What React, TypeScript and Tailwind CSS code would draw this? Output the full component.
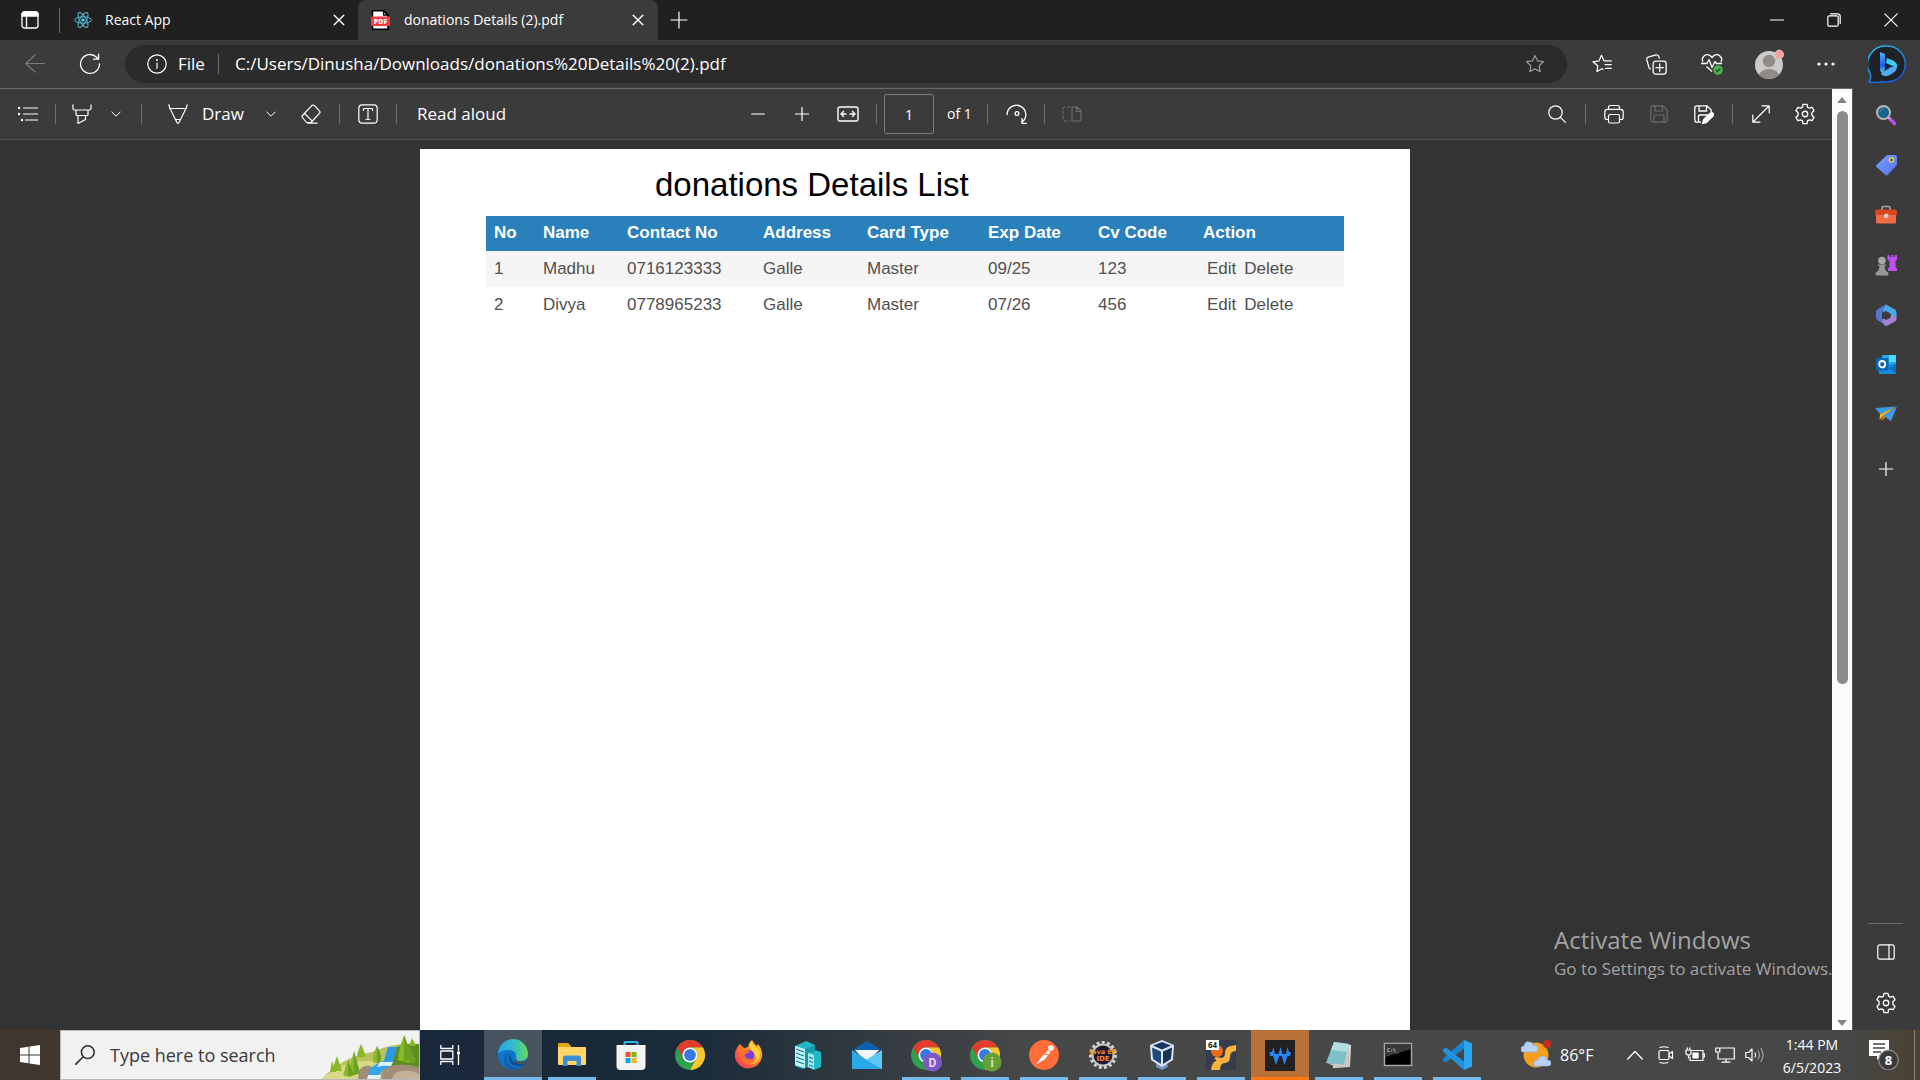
import React, { ReactNode } from "react";

type IconProps = { children: ReactNode; size?: string; box?: string; width?: number };

function Line({ children, size = "size-5", box = "0 0 20 20", width = 1.2 }: IconProps) {
  return (
    <svg className={`${size} shrink-0`} viewBox={box} fill="none" stroke="currentColor" strokeWidth={width} strokeLinecap="round" strokeLinejoin="round" aria-hidden="true">
      {children}
    </svg>
  );
}

function Art({ children, size = "size-[30px]", box = "0 0 30 30" }: IconProps) {
  return (
    <svg className={`${size} shrink-0`} viewBox={box} aria-hidden="true">
      {children}
    </svg>
  );
}

function Cell({ label, className, children }: { label: string; className: string; children: ReactNode }) {
  return (
    <button type="button" aria-label={label} className={`flex h-full shrink-0 items-center justify-center ${className}`}>
      {children}
    </button>
  );
}

const Divider = ({ className = "" }: { className?: string }) => <span className={`h-5 w-px shrink-0 bg-[#6e6e6e] ${className}`} />;

const Close = () => (
  <Line size="size-3" box="0 0 12 12" width={1.4}><path d="M1.2 1.2l9.6 9.6M10.8 1.2l-9.6 9.6" /></Line>
);
const Chevron = () => <Line size="size-[10px]" box="0 0 10 10" width={1}><path d="M.8 3l4.2 4.2L9.2 3" /></Line>;
const Gear = () => (
  <Line size="size-[22px]">
    <circle cx="10" cy="10" r="2.5" />
    <path d="M8.2 1.3h3.6l.5 2.4 1.7 1 2.4-.8 1.8 3.1-1.9 1.7v2.6l1.9 1.7-1.8 3.1-2.4-.8-1.7 1-.5 2.4H8.2l-.5-2.4-1.7-1-2.4.8L1.8 13l1.9-1.7V8.7L1.8 7l1.8-3.1 2.4.8 1.7-1z" />
  </Line>
);

function TabBar() {
  return (
    <div className="flex h-10 shrink-0 items-center bg-[#202020]">
      <Cell label="Tab actions" className="w-[59px]">
        <Line size="size-[18px]" box="0 0 18 18" width={1.3}>
          <rect x="1" y="1" width="16" height="16" rx="2.5" />
          <path d="M1 5V3.4Q1 1 3.4 1h11.2Q17 1 17 3.4V5z" fill="currentColor" />
          <path d="M5.5 5v12" />
        </Line>
      </Cell>
      <span className="h-[25px] w-px bg-[#6a6a6a]" />
      <div className="flex h-full w-[298px] items-center pl-3.5">
        <Art size="size-[18px]" box="0 0 18 18">
          <g fill="none" stroke="#53bcd8" strokeWidth="1">
            <ellipse cx="9" cy="9" rx="8.4" ry="3.2" />
            <ellipse cx="9" cy="9" rx="8.4" ry="3.2" transform="rotate(60 9 9)" />
            <ellipse cx="9" cy="9" rx="8.4" ry="3.2" transform="rotate(120 9 9)" />
          </g>
          <circle cx="9" cy="9" r="1.6" fill="#61dafb" />
        </Art>
        <span className="ml-[13px] text-sm">React App</span>
        <Cell label="Close React App" className="ml-auto w-[38px]"><Close /></Cell>
      </div>
      <div className="flex h-full w-[300px] items-center rounded-t-lg bg-[#3b3b3b] pl-[13px]">
        <Art size="h-5 w-[19px]" box="0 0 19 20">
          <path d="M1.5.8H13L17 5v14.2H1.5z" fill="#fff" stroke="#000" strokeWidth="1.5" />
          <path d="M12.6.8V5H17z" fill="#fff" stroke="#000" strokeWidth="1.4" />
          <rect y="6.5" width="19" height="9.5" rx="1" fill="#f63b3b" />
          <text x="9.5" y="13.8" textAnchor="middle" fontSize="7" fontWeight="800" fill="#fff" fontFamily="Open Sans">PDF</text>
        </Art>
        <span className="ml-3.5 text-sm">donations Details (2).pdf</span>
        <Cell label="Close donations Details" className="ml-auto w-10"><Close /></Cell>
      </div>
      <Cell label="New tab" className="w-[42px]">
        <Line size="size-[18px]" box="0 0 18 18"><path d="M9 1v16M1 9h16" /></Line>
      </Cell>
      <div className="ml-auto flex h-full">
        <Cell label="Minimize" className="w-[57px]"><Line size="size-3.5" box="0 0 14 14"><path d="M.5 7h13" /></Line></Cell>
        <Cell label="Restore" className="w-[57px]">
          <Line size="size-3.5" box="0 0 14 14"><rect x=".8" y="2.8" width="10.4" height="10.4" rx="1.5" /><path d="M3.5.8h7Q13.2.8 13.2 3.5v7" /></Line>
        </Cell>
        <Cell label="Close window" className="w-[58px]"><Line size="size-3.5" box="0 0 14 14"><path d="M.8.8l12.4 12.4M13.2.8L.8 13.2" /></Line></Cell>
      </div>
    </div>
  );
}

const star = "M10 1.6l2.6 5.3 5.8.8-4.2 4.1 1 5.8L10 14.9l-5.2 2.7 1-5.8L1.6 7.7l5.8-.8z";

function AddressBar() {
  return (
    <div className="flex h-12 shrink-0 items-center bg-[#3b3b3b]">
      <Cell label="Back" className="w-[70px] text-[#7b7b7b]"><Line><path d="M19.4 9.5H.8M10 1L.8 9.5 10 18" /></Line></Cell>
      <Cell label="Refresh" className="w-10"><Line size="size-[22px]"><path d="M18.6 10A8.6 8.6 0 1 1 16 3.8l1.2 1.3M17.8 1v4.6h-4.6" /></Line></Cell>
      <div className="ml-[15px] flex h-[38px] flex-1 items-center rounded-full bg-[#2b2b2b] pl-[22px]">
        <Line><circle cx="10" cy="10" r="9.2" /><path d="M10 9v5.2" /><circle cx="10" cy="6" r=".4" fill="currentColor" /></Line>
        <span className="ml-[11px] w-7 text-[17px]">File</span>
        <Divider className="ml-3" />
        <input aria-label="Address" className="ml-4 min-w-0 flex-1 bg-transparent text-[17px] outline-none" defaultValue="C:/Users/Dinusha/Downloads/donations%20Details%20(2).pdf" />
        <Cell label="Add to favorites" className="mr-[22px] w-5 text-[#9a9a9a]"><Line><path d={star} /></Line></Cell>
      </div>
      <div className="flex h-full items-center pl-[7px]">
        <Cell label="Favorites" className="w-[55px]">
          <Line><path d="M11 15.4l-1.2-.6-4.9 2.8.9-5.8-4.9-4 6-.9L9.5 1.3l2.6 5.6h7.2M13 10.6h6.3M13.5 14.4h5.8" /></Line>
        </Cell>
        <Cell label="Collections" className="w-[55px]">
          <Line size="size-[21px]"><rect x="6.8" y="6.8" width="12.4" height="12.4" rx="2.5" /><path d="M13 9.5v7M9.5 13h7M4.2 14.2L3 13.4.8 5.6Q.4 3.6 2 3L9.6.9Q11.2.6 12 2l.7 2" /></Line>
        </Cell>
        <Cell label="Browser essentials" className="w-[55px]">
          <svg className="size-[22px]" viewBox="0 0 22 22" fill="none" stroke="currentColor" strokeWidth="1.3" strokeLinejoin="round" aria-hidden="true">
            <path d="M2 9C-.5 4 5 0 9 2.5l2 2 2-2C17 0 22.5 4 20 9M5.5 13.5l5.5 5M0 10.500h6l2-4 3 8 3-6 1.500 2H21" />
            <circle cx="17" cy="17" r="4.8" fill="#4caf50" stroke="none" />
            <path d="M14.8 17l1.7 1.6 2.8-3" stroke="#1d4f22" />
          </svg>
        </Cell>
        <Cell label="Profile" className="w-[60px]">
          <Art box="0 0 30 30">
            <clipPath id="avatar"><circle cx="15" cy="16" r="14" /></clipPath>
            <g clipPath="url(#avatar)"><rect width="30" height="30" fill="#cdcbc8" /><circle cx="15" cy="12" r="6.2" fill="#8f8b88" /><ellipse cx="15" cy="28" rx="10.5" ry="8" fill="#8f8b88" /></g>
            <circle cx="25.2" cy="5.5" r="4.4" fill="#f9a19a" stroke="#d7d2cf" strokeWidth=".8" />
          </Art>
        </Cell>
        <Cell label="Settings and more" className="w-[54px]">
          <Line size="size-[18px]" box="0 0 18 18"><g fill="currentColor" stroke="none"><circle cx="2" cy="9" r="1.6" /><circle cx="9" cy="9" r="1.6" /><circle cx="16" cy="9" r="1.6" /></g></Line>
        </Cell>
        <Cell label="Discover" className="w-[67px]">
          <Art size="size-[38px]" box="0 0 38 38">
            <defs>
              <linearGradient id="bing-ring" x1="0" y1="0" x2=".6" y2="1"><stop stopColor="#27c7ee" /><stop offset="1" stopColor="#1959e0" /></linearGradient>
              <linearGradient id="bing-b" x1="0" y1="0" x2="0" y2="1"><stop stopColor="#49b8fa" /><stop offset=".65" stopColor="#2458ef" /><stop offset="1" stopColor="#4bdcf2" /></linearGradient>
            </defs>
            <path d="M19 1a18 18 0 1 1-4 35.5Q9 38 1 37q3-4 1-9A18 18 0 0 1 19 1z" fill="#202124" stroke="url(#bing-ring)" strokeWidth="1.5" />
            <path d="M12 7l5 2v15l-2 4q-3-1-3-4z" fill="url(#bing-b)" />
            <path d="M19 13l7 3q4 3 3 7L18 18z" fill="#37cdf5" />
            <path d="M15 27l8-5 6-1q0 5-4 7-7 6-12 1l1-2z" fill="#54a9f5" />
          </Art>
        </Cell>
      </div>
    </div>
  );
}

const Floppy = () => (
  <Line size="size-[18px]" box="0 0 18 18"><path d="M3 .8h10l4.2 4.2V15q0 2.2-2.2 2.2H3Q.8 17.2.8 15V3Q.8.8 3 .8zM5 1v5h7.5V1M4 17v-6q0-1 1-1h8q1 0 1 1v6" /></Line>
);

function PdfToolbar() {
  return (
    <div className="grid h-[51px] shrink-0 grid-cols-[1fr_auto_1fr] items-center border-b border-[#505050] bg-[#3b3b3b] text-[17px]">
      <div className="flex h-full items-center pl-px">
        <Cell label="Table of contents" className="w-[54px]">
          <Line><path d="M5.5 4h14M5.5 10h14M7.5 16h12" /><g fill="currentColor"><circle cx="1" cy="4" r=".6" /><circle cx="1" cy="10" r=".6" /><circle cx="4" cy="16" r=".6" /></g></Line>
        </Cell>
        <Divider />
        <Cell label="Highlight" className="w-[52px]"><Line><path d="M1 .8V4.5Q1 6 2.5 6h15Q19 6 19 4.5V.8M4 6v4.5q0 1 1 1h10q1 0 1-1V6M6 11.5v8l7.5-4v-4" /></Line></Cell>
        <Cell label="Highlight options" className="ml-px w-3.5"><Chevron /></Cell>
        <Divider className="ml-[18px]" />
        <button type="button" className="ml-[26px] flex items-center gap-3.5">
          <Line><path d="M.8.8l1 3.2 7 14.2q.4 1 1.2 1t1.2-1l7-14.2 1-3.2M1.6 4.5h16.8M7.5 15.5h5" /></Line>
          <span className="w-10">Draw</span>
        </button>
        <Cell label="Draw options" className="ml-[22px] w-3.5"><Chevron /></Cell>
        <Cell label="Erase" className="ml-[23px] w-5"><Line><path d="M10.5 1.8L1.5 11.5q-1 1 0 2l4 5H10l8.600-9.400q1-1 0-2L13.800 1.800q-1.600-1.400-3.300 0zM3.500 9.500l7.600 7.400M7 19.200h9" /></Line></Cell>
        <Divider className="ml-[18px]" />
        <Cell label="Add text" className="ml-[18px] w-5"><Line><rect x=".8" y=".8" width="18.4" height="18.4" rx="3.5" /><path d="M5.5 6.5V4.5h9v2M10 4.5v11M8 15.5h4" /></Line></Cell>
        <Divider className="ml-[18px]" />
        <button type="button" className="ml-5 whitespace-nowrap">Read aloud</button>
      </div>
      <div className="flex h-full items-center pr-[11px]">
        <Cell label="Zoom out" className="w-11 text-[#c4c4c4]"><Line size="size-3.5" box="0 0 14 14" width={1.6}><path d="M.8 7h12.4" /></Line></Cell>
        <Cell label="Zoom in" className="w-11"><Line size="size-3.5" box="0 0 14 14"><path d="M7 .5v13M.5 7h13" /></Line></Cell>
        <Cell label="Fit to width" className="w-12"><Line size="h-4 w-[22px]" box="0 0 22 16" width={1.4}><rect x="1" y="1" width="20" height="14" rx="2" /><path d="M9 8H4.2M6.5 5.5L4 8l2.5 2.5M13 8h4.8M15.5 5.5L18 8l-2.5 2.5" /></Line></Cell>
        <Divider className="ml-1" />
        <input aria-label="Page number" defaultValue="1" className="ml-[7px] h-10 w-[50px] rounded-xs border border-[#7a7a7a] bg-transparent text-center text-sm outline-none" />
        <span className="ml-[13px] w-7 text-sm whitespace-nowrap">of 1</span>
        <Divider className="ml-3" />
        <Cell label="Rotate" className="ml-4 w-[26px]"><Line size="size-[22px]"><path d="M1 10.5A8.5 8.5 0 1 1 14.5 17.500M14.500 14v4.500h4" /><circle cx="10" cy="9.5" r="1.7" /></Line></Cell>
        <Divider className="ml-3.5" />
        <Cell label="Page view" className="ml-3.5 w-[26px] text-[#6c6c6c]"><Line size="h-4 w-5" box="0 0 20 16"><path d="M10 1h5l4 4v8q0 2-2 2h-7zM14.500 1v4.500H19" /><path d="M8 1H3Q1 1 1 3v10q0 2 2 2h5" strokeDasharray="2.5 2.5" /></Line></Cell>
      </div>
      <div className="flex h-full items-center justify-end">
        <Cell label="Find" className="w-[56px]"><Line size="size-[18px]" box="0 0 18 18"><circle cx="7.5" cy="7.5" r="6.7" /><path d="M12.4 12.4l5 5" /></Line></Cell>
        <Divider />
        <Cell label="Print" className="w-[56px]"><Line><path d="M4.5 15.5H3.2Q.8 15.5.8 13.2V8q0-2.7 2.7-2.7h13q2.7 0 2.7 2.7v5.200q0 2.300-2.400 2.300h-1.300M4.500 5.300V3.500q0-2 2-2h7q2 0 2 2v1.800" /><rect x="4.5" y="10.5" width="11" height="8.5" rx="1.5" /></Line></Cell>
        <Cell label="Save" className="w-[34px] text-[#6c6c6c]"><Floppy /></Cell>
        <Cell label="Save as" className="w-[56px]">
          <svg className="size-5" viewBox="0 0 20 20" fill="none" stroke="currentColor" strokeWidth="1.3" aria-hidden="true"><path d="M3 1.8h10l4.200 4.200v4M7 18.200H3Q.8 18.200.8 16V4Q.8 1.800 3 1.800M5 2v5h7.500V2M4.500 18v-6q0-1 1-1H14" /><path d="M8.500 19.500l1.200-4 6.500-6.300q1.500-1 2.700.1t0 2.700l-6.400 6.500z" fill="currentColor" /></svg>
        </Cell>
        <Divider />
        <Cell label="Full screen" className="w-[56px]"><Line size="size-[18px]" box="0 0 18 18"><path d="M1 17L17 1M10 .8h7.2V8M.8 10v7.2H8" /></Line></Cell>
        <Cell label="PDF settings" className="mr-4 ml-[5px] w-[22px]"><Gear /></Cell>
      </div>
    </div>
  );
}

const columns: [string, string][] = [
  ["No", "w-[49px]"], ["Name", "w-[84px]"], ["Contact No", "w-[136px]"], ["Address", "w-[104px]"],
  ["Card Type", "w-[121px]"], ["Exp Date", "w-[110px]"], ["Cv Code", "w-[105px]"], ["Action", "w-[149px]"],
];
const rows = [
  ["1", "Madhu", "0716123333", "Galle", "Master", "09/25", "123"],
  ["2", "Divya", "0778965233", "Galle", "Master", "07/26", "456"],
];

function Document() {
  return (
    <main className="min-h-0 flex-1 overflow-hidden bg-[#333333] pt-[9px] pr-0.5">
      <article className="mx-auto h-full max-w-[990px] bg-white font-['Liberation_Sans',Arial,sans-serif]">
        <h1 className="pt-4 pb-3 pl-[235px] text-[33px] leading-[39px] text-black">donations Details List</h1>
        <table className="ml-[66px] table-fixed border-collapse text-left text-[17px] text-[#505050]">
          <thead>
            <tr className="h-[35px] bg-[#2980ba] text-white">
              {columns.map(([name, width]) => <th key={name} className={`${width} px-2 pb-0.5 font-bold whitespace-nowrap`}>{name}</th>)}
            </tr>
          </thead>
          <tbody>
            {rows.map((row) => (
              <tr key={row[0]} className="h-9 odd:bg-[#f5f5f5]">
                {row.map((value, i) => <td key={i} className="px-2">{value}</td>)}
                <td className="pr-2 pl-3"><span className="flex gap-2"><span>Edit</span><span>Delete</span></span></td>
              </tr>
            ))}
          </tbody>
        </table>
      </article>
    </main>
  );
}

function Scrollbar() {
  return (
    <div className="flex w-[21px] shrink-0 flex-col items-center border-r border-[#5a5a5a] bg-[#fcfcfc] pt-2 pb-1" aria-hidden="true">
      <Art size="h-1.5 w-2.5" box="0 0 10 6"><path d="M0 6l5-6 5 6z" fill="#858585" /></Art>
      <div className="mt-2 flex w-[11px] flex-1 flex-col">
        <div className="h-[63%] rounded-full bg-[#8b8b8b]" />
      </div>
      <Art size="h-1.5 w-2.5" box="0 0 10 6"><path d="M0 0l5 6 5-6z" fill="#858585" /></Art>
    </div>
  );
}

const sideIcons: [string, ReactNode][] = [
  ["Search", <g><path d="M15 15l4.500 4.500" stroke="#c04be8" strokeWidth="3.6" strokeLinecap="round" /><path d="M12.500 12.500l2.500 2.500" stroke="#b9b9b9" strokeWidth="2" /><circle cx="8.5" cy="8.5" r="6.500" fill="#17628a" stroke="#b9b9b9" strokeWidth="2" /><path d="M4.800 8a4 4 0 0 1 4-3.400" fill="none" stroke="#3e8fb5" /></g>],
  ["Shopping", <g><path d="M11 2q.8-1 2-1h7q2 0 2 2v7q0 1-1 2l-8.500 9q-1 1-2 0L1.500 13q-1-1 0-2z" fill="url(#side-tag)" /><circle cx="16.500" cy="6" r="2" fill="#2f3c87" stroke="#f7cf2b" strokeWidth="1.600" /></g>],
  ["Tools", <g><path d="M7 6V4q0-1.500 1.500-1.500h5Q15 2.500 15 4v2" fill="none" stroke="#a9a9a9" strokeWidth="1.600" /><rect x="1" y="9" width="20" height="10.500" rx="1.500" fill="#ee6c46" /><path d="M0 7q0-1.500 1.500-1.500h19Q22 5.500 22 7v4H0z" fill="#d8451c" /><rect x="9" y="9.500" width="4.500" height="4.500" rx="2" fill="#cecece" /></g>],
  ["Games", <g><path d="M12.500 1h2v2h2V1h2v2h1.500V1H22v5l-1.500 1v5.500L22 15v2h-9v-2l1.500-2.500V7L12.500 6z" fill="#bb51ee" /><circle cx="7" cy="6.500" r="3.800" fill="#a8a8a8" /><path d="M3 10.500h8v1.500H9.500q0 4 3.500 6.500 1.500 3-1 3H2q-2.500 0-1-3 3.500-2.500 3.500-6.500H3z" fill="#979797" /></g>],
  ["Microsoft 365", <g><path d="M11 .5l9 5q1.500 1 1.500 3v5l-6-1V10L11 7 7.500 9 8 3z" fill="#46a9e8" /><path d="M11 .5L7 8v7l4 6.500-8-5Q1 15.500 1 13V8q0-2 2-3z" fill="#5676d4" /><path d="M7 15.500l8.500-4 6 .5v3q0 1.500-1.500 2.500L12.500 21.500q-1.500.8-3 0z" fill="#a283d3" /><path d="M11 7l4.500 2.800v4L11 16l-4-2.500V9z" fill="#3b3b3b" /></g>],
  ["Outlook", <g><rect x="7" y="1" width="14" height="19" rx="1" fill="#28a8ea" /><path d="M14 1h7v7h-7z" fill="#50d9ff" /><path d="M3 10l18 0v10H4z" fill="#1490df" /><path d="M14 14l7-4v10z" fill="#0f6fbd" /><rect x="1" y="4" width="12.500" height="12.500" rx="1" fill="#0a66b5" /><ellipse cx="7.200" cy="10.200" rx="3" ry="3.200" fill="none" stroke="#fff" strokeWidth="1.900" /></g>],
  ["Drop", <g><path d="M0 4l21-1.500L5 10z" fill="#2f9cec" /><path d="M5 10l16-7.500L8 12l-3.500 4z" fill="#f6b719" /><path d="M8 11.500L22 2.500 16 17z" fill="#4297ef" /><path d="M8 11.500l3 1.500-5 4z" fill="#c58416" /></g>],
];

function Sidebar() {
  return (
    <aside className="flex w-[67px] shrink-0 flex-col items-center bg-[#3b3b3b] pt-0.5 pr-0.5 pb-0.5">
      <svg className="h-0 w-0" aria-hidden="true"><defs><linearGradient id="side-tag" x1="0" y1="0" x2="1" y2="1"><stop stopColor="#6ea6fa" /><stop offset="1" stopColor="#5e6df0" /></linearGradient></defs></svg>
      {sideIcons.map(([name, art]) => (
        <button key={name} type="button" aria-label={name} className="flex h-[50px] w-full shrink-0 items-center justify-center"><Art size="size-[22px]" box="0 0 22 22">{art}</Art></button>
      ))}
      <button type="button" aria-label="Customize" className="mt-1 flex h-[50px] w-full items-center justify-center"><Line size="size-3.5" box="0 0 14 14"><path d="M7 .5v13M.5 7h13" /></Line></button>
      <span className="mt-auto h-px w-[35px] bg-[#6a6a6a]" />
      <button type="button" aria-label="Hide sidebar" className="mt-0.5 flex h-[52px] w-full items-center justify-center"><Line size="h-4 w-[18px]" box="0 0 18 16"><rect x=".8" y=".8" width="16.4" height="14.4" rx="2" /><path d="M12 1v14" /></Line></button>
      <button type="button" aria-label="Settings" className="flex h-[50px] w-full items-center justify-center"><Gear /></button>
    </aside>
  );
}

const chromeArt = (
  <g>
    <circle cx="15" cy="15" r="15" fill="#2fa04e" />
    <path d="M2 7.500A15 15 0 0 1 28 7.500H15a7.500 7.500 0 0 0-6.500 11.200z" fill="#e33b2e" />
    <path d="M28 7.500A15 15 0 0 1 15 30l6.500-11.200A7.500 7.500 0 0 0 15 7.500z" fill="#fcc62d" />
    <circle cx="15" cy="15" r="7.500" fill="#fff" /><circle cx="15" cy="15" r="5.900" fill="#3578e8" />
  </g>
);

type Task = { name: string; art: ReactNode; state?: "open" | "active" | "alert" };
const tasks: Task[] = [
  { name: "Microsoft Edge", state: "active", art: <g>
    <circle cx="15" cy="15" r="15" fill="#0f76cf" />
    <path d="M0 14A15 15 0 0 1 30 14q0 7-8 7-5 0-4-3 1-8-7-8Q3 10 0 14z" fill="url(#edge-top)" />
    <path d="M11 12Q6 20 12 25q7 5 15 0Q22 30 15 30 5 28 6 19q1-6 5-7z" fill="#1260a8" />
    <path d="M17 12q-6 1-4 6 2 6 9 5 4-.5 6-2 1 1 0 2-4 5-10 3-8-2-7-9 1-4 6-5z" fill="#0c4c94" />
    <path d="M18.500 18.500q-1 3 4 3 5 0 7.500-4v3l-3 3q-8 2-11-2z" fill="#465563" />
  </g> },
  { name: "File Explorer", state: "open", art: <g><path d="M1 4q0-1 1-1h9l3 3v3H1z" fill="#e5a50a" /><rect x="1" y="7" width="28" height="18" rx="1" fill="#ffd667" /><path d="M6 26v-8q0-2.500 2.500-2.500h13Q24 15.500 24 18v8h-4.500v-5h-9v5z" fill="#3b8ed6" /></g> },
  { name: "Microsoft Store", art: <g><path d="M8.500 6V3q0-1 1-1h11q1 0 1 1v3" fill="none" stroke="#33b2ec" strokeWidth="2" /><path d="M.5 5h29v21q0 4-4 4h-21q-4 0-4-4z" fill="#f3f3f3" /><path d="M9.500 12H14.500v5h-5z" fill="#f25022" /><path d="M15.500 12h5v5h-5z" fill="#7fba00" /><path d="M9.500 18h5v5h-5z" fill="#00a4ef" /><path d="M15.500 18h5v5h-5z" fill="#ffb900" /></g> },
  { name: "Google Chrome", art: chromeArt },
  { name: "Firefox", art: <g><path d="M6 4l4 4 4-1q1-5 4-7 2 4 5 6l1-2q5 6 4 13a13.800 13.800 0 0 1-27 1Q0 10 6 4z" fill="url(#fox)" /><path d="M17 1q3 6 7 8 3 5 1 10-3 6-9 5 8-6 1-14-3-4 0-9z" fill="#ffd13a" /><circle cx="15" cy="15.500" r="5.500" fill="#7a3de0" /><path d="M5 8q4-1 6 2l5 1q-1 3-5 3 0 5 5 5 5 0 6-4 1 9-7 9Q5 24 5 13z" fill="#ff7328" opacity=".85" /></g> },
  { name: "Server Manager", art: <g><path d="M2 6L13 1l9 4v5l6 2v15l-7 3-7-3-4 2-8-3z" fill="#22b8c8" /><path d="M2 6l10 3v19L2 25z" fill="#c4f4f6" /><path d="M15 13l6 2v14l-6-2z" fill="#a7e9ee" /><path d="M12 9l10-4v7l-7 1v12l-3 3z" fill="#1599aa" /><path d="M3 9l8 3M3 13l8 3M3 17l8 3M3 21l8 3M16 17l4 1.500M16 21l4 1.500M16 25l4 1.500" stroke="#0d7f90" strokeWidth="1.300" /></g> },
  { name: "Mail", art: <g><path d="M0 10L15 1l15 9z" fill="#0c5fae" /><path d="M3 10h24L15 23z" fill="#f4f4f4" /><path d="M0 10l15 10 15-10v19H0z" fill="#2ba8ea" /><path d="M3 10h24l-12 9z" fill="#f4f4f4" /><path d="M14 20L30 10v19z" fill="#5bc8f5" /></g> },
  { name: "Chrome profile D", state: "open", art: <g>{chromeArt}<circle cx="21.500" cy="22" r="9.500" fill="#7e57c2" /><text x="21.500" y="26.500" textAnchor="middle" fontSize="12" fontWeight="700" fill="#e4d8f6" fontFamily="Roboto">D</text></g> },
  { name: "Chrome profile i", state: "open", art: <g>{chromeArt}<circle cx="22" cy="22" r="9.500" fill="#689f38" /><text x="22" y="26.500" textAnchor="middle" fontSize="12" fontWeight="700" fill="#d6e8c4" fontFamily="Roboto">i</text></g> },
  { name: "Postman", state: "open", art: <g><circle cx="15" cy="15" r="15" fill="#ff6c37" /><circle cx="22" cy="8" r="2.800" fill="#fff" /><path d="M19.500 10l2 2.500-6 7-8.500 5 6-8z" fill="#fff" /><path d="M15 14l5 1" stroke="#ff6c37" /></g> },
  { name: "Eclipse Java EE IDE", state: "open", art: <g><circle cx="15" cy="15" r="12" fill="none" stroke="#d6d6d6" strokeWidth="4" strokeDasharray="2.8 2.2" /><circle cx="15" cy="15" r="10.500" fill="#211a2e" stroke="#c5c5c5" strokeWidth="2" /><text x="15" y="14" textAnchor="middle" fontSize="6.500" fontWeight="700" fill="#f08a24" fontFamily="DejaVu Sans">Java EE</text><text x="15" y="21" textAnchor="middle" fontSize="7" fontWeight="700" fill="#f08a24" fontFamily="DejaVu Sans">IDE</text></g> },
  { name: "VirtualBox", state: "open", art: <g><path d="M9 23h11l1 4-6 3-6-3z" fill="#7a95c4" /><path d="M15 0l12 5-1 15-11 7L4 20 3 5z" fill="#dce5ef" /><path d="M15 2l9 3.500-9 4-9-4z" fill="#16365f" /><path d="M5 7.500l9 4V24l-8-5z" fill="#204a7c" /><path d="M25 7.500l-9 4V24l8-5z" fill="#163355" /></g> },
  { name: "Debugger 64", state: "open", art: <g><path d="M0 0h30v30H0z" fill="#363c4b" /><circle cx="11" cy="11" r="6" fill="#f06c1c" /><path d="M5 30q1-8 5-9 1-2-2-2l2-2 6 1q3-1 3-5 0-6 6-7l5-1v6q-6 0-6 6 0 6-6 6-4 1-4 7z" fill="#f8b13b" /><path d="M0 0h13v10H0z" fill="#fff" /><text x="6.500" y="8" textAnchor="middle" fontSize="8" fontWeight="700" fill="#222" fontFamily="Open Sans">64</text></g> },
  { name: "Wave", state: "alert", art: <g><path d="M0 0h30v31H0z" fill="#232020" /><path d="M4.500 12h2.500l1.500-5 1.500 7h3.500l2-7 2 7h3.500l1.500-7 1.500 5H26l-1 4h-2.500L19.500 25l-2.800-9h-2.400L11 25 8 16H5z" fill="#2585f2" /></g> },
  { name: "Notepad++", state: "open", art: <g><path d="M11 3l16 2-1 22-17 1z" fill="#e5e3dc" /><path d="M10 2l15 2-5 21L2 23z" fill="#7fc1cb" /><path d="M10 2l15 2-2 8L7 10z" fill="#b5dde0" /><path d="M3 23l17 2 5-19 1 21H12z" fill="#cac6bb" /></g> },
  { name: "Command Prompt", state: "open", art: <g><rect x="1.500" y="3.500" width="27" height="22" fill="#000" stroke="#a5a5a5" strokeWidth="1.500" /><path d="M2 4h26v5L2 17z" fill="#3a3a3a" /><text x="4" y="11.500" fontSize="5" fill="#fff" fontFamily="DejaVu Sans Mono">C:\_</text></g> },
  { name: "Visual Studio Code", state: "open", art: <g><path d="M22 0l8 3.500v23L22 30z" fill="#2aa7f0" /><path d="M22 0v8.500L4 22.500 1 20.800q-1-1 0-2z" fill="#1c84cc" /><path d="M22 30v-8.500L4 7.500 1 9.200q-1 1 0 2z" fill="#1f93de" /></g> },
];

function SearchArt() {
  return (
    <svg className="ml-auto h-full w-[97px]" viewBox="0 0 97 48" aria-hidden="true">
      <path d="M0 48Q18 27 50 21 72 11 97 13v35z" fill="#b9c25f" />
      <path d="M0 48q25-22 58-17l-14 17z" fill="#d6da86" />
      <path d="M66 20q16-9 31-7v24H62z" fill="#5d8c24" />
      <path d="M66 16h9l-5 17h-9z" fill="#2b9be8" />
      <path d="M60 30l12 1-7 7q-8 1-8 10H43l3-10z" fill="#38a4e9" />
      <path d="M58 31h13l-2 4q-8-1-14 1zM45 44h14l-1 4H43z" fill="#e2f2fb" />
      <path d="M37 40q3-6 12-5l-4 13H36zM60 48q-3-8 6-12 14-5 31 0v12z" fill="#a28d77" />
      <path d="M70 48q2-9 12-8 9-1 15 3v5z" fill="#c5b09a" />
      <g fill="#8ab828">
        <path d="M39 13q5 11 4 13h-8q0-4 4-13zM15 25l5 15H10zM10 30l4 11H8zM32 20l6 22q-6 4-12 0zM55 15q6 12 3 16-3 2-7 0-1-6 4-16zM82 4q8 19 5 25-5 3-11 0 0-8 6-25zM90 7l4 8h-7zM87 15l7 15q-6 4-13 0zM26 29l6 15q-5 3-11 0z" />
      </g>
      <g fill="#5e9620" opacity=".7"><path d="M32 20l6 22-6 2zM55 15q6 12 3 16l-3 1zM82 4q8 19 5 25l-5 1zM26 29l6 15-6 2zM87 15l7 15-7 2z" /></g>
    </svg>
  );
}

function Taskbar() {
  return (
    <footer className="flex h-[50px] shrink-0 items-center bg-[#41362e]">
      <Cell label="Start" className="w-[60px]">
        <Art size="size-5" box="0 0 20 20"><path d="M0 3l8.500-1.300v7.800H0zM9.500 1.500L20 0v9.500H9.500zM0 10.500h8.500v7.800L0 17zM9.500 10.500H20V20L9.500 18.500z" fill="#fff" /></Art>
      </Cell>
      <label className="flex h-full w-[360px] shrink-0 items-center border border-[#b9b9b9] bg-[#f1f1f1] pl-3.5 text-[#2c2c2c]">
        <Line size="size-5" width={1.5}><circle cx="12.800" cy="7.200" r="6.400" /><path d="M8.200 11.800L.6 19.400" /></Line>
        <input aria-label="Search" placeholder="Type here to search" className="ml-[15px] w-[180px] bg-transparent text-lg outline-none placeholder:text-[#3a3a3a]" />
        <SearchArt />
      </label>
      <div className="flex h-full min-w-0 flex-1 bg-linear-to-r from-[#19273a] from-0% via-[#1a2b39] via-18% to-[#464747] to-40%">
        <Cell label="Task view" className="mr-1 w-[60px] text-white">
          <Line size="size-5" width={1.3}><path d="M.8.5v3h12v-3M.8 19.500v-3h12v3M.8 6h12v8H.8zM18.500.5v5M18.500 10v9.500" /><path d="M17 6.500h3v2.800h-3z" fill="currentColor" stroke="none" /></Line>
        </Cell>
        <svg className="h-0 w-0" aria-hidden="true"><defs><linearGradient id="edge-top"><stop stopColor="#20a6e8" /><stop offset=".55" stopColor="#35bfc5" /><stop offset="1" stopColor="#67dc55" /></linearGradient><linearGradient id="fox" x1="1" y1="0" x2="0" y2="1"><stop stopColor="#ffd43a" /><stop offset=".5" stopColor="#ff7a2a" /><stop offset="1" stopColor="#f0246e" /></linearGradient></defs></svg>
        {tasks.map(({ name, art, state }) => {
          const tile = state === "active" ? "bg-[#47535f]" : state === "alert" ? "bg-[#b87036]" : "";
          const bar = state === "active" ? "w-full bg-[#76b9ed]" : state === "alert" ? "w-full bg-[#ff7a0a]" : state === "open" ? "w-12 bg-[#76b9ed]" : "w-0";
          return (
            <button key={name} type="button" aria-label={name} className={`mr-px flex h-full w-[58px] shrink-0 flex-col items-center pt-2.5 ${tile}`}>
              <svg className="h-[30px] w-[30px] overflow-visible" viewBox="0 0 30 30" aria-hidden="true">{art}</svg>
              <span className={`mt-auto h-[3px] ${bar}`} />
            </button>
          );
        })}
        <div className="ml-auto flex h-full items-center text-white">
          <button type="button" className="flex h-full w-[110px] items-center gap-[9px] pl-[11px] text-base">
            <Art><circle cx="15" cy="15" r="12.500" fill="#f5a11d" /><circle cx="26" cy="4" r="4" fill="#c42b1c" /><path d="M3 12q-4 0-3-3 0-3 3-3 1-5 5-4 4 0 4 3 5 0 5 4 0 3-3 3zM15 26q-3 0-2-3 0-3 4-3 1-4 5-4 3 0 4 4 4 0 4 3t-3 3z" fill="#b9d0f5" stroke="#8eb0e6" strokeWidth=".7" /></Art>
            <span>86°F</span>
          </button>
          <Cell label="Show hidden icons" className="w-[30px]"><Line size="h-2.5 w-4" box="0 0 16 10" width={1.4}><path d="M.8 9L8 1.500 15.200 9" /></Line></Cell>
          <Cell label="Meet Now" className="w-[30px]"><Line size="size-[18px]" box="0 0 18 18"><rect x="3" y="4.500" width="10" height="9" rx="1.500" /><path d="M13 8l3.500-2.500v7L13 10M4 1.500Q8 0 12 1.500M4 16.500q4 1.500 8 0" /></Line></Cell>
          <Cell label="Battery" className="w-[30px]"><Line size="h-4 w-5" box="0 0 20 16"><path d="M7 3.500h11v10H5V10M18.500 7h1v3h-1" /><path d="M8 6h5v5H8z" fill="currentColor" /><path d="M1 3h5v3q0 2-2.500 2T1 6zM2.200 3V.8M4.800 3V.8M3.500 8v3" /></Line></Cell>
          <Cell label="Network" className="w-[30px]"><Line size="h-4 w-5" box="0 0 20 16"><path d="M5.500 1H19.300v11H3V6M7 15.200h8M11 12v3M.8 1h4v4h-4z" /></Line></Cell>
          <Cell label="Volume" className="w-[30px]"><Line size="h-4 w-5" box="0 0 20 16"><path d="M.8 5.500h2.800L7 2v12l-3.400-3.500H.8zM10 6q1.500 2 0 4" /><path d="M13 4q3 4 0 8M16 1.500q4 6.500 0 13" opacity=".5" /></Line></Cell>
          <div className="flex h-full bg-linear-to-r from-[#464747] from-50% to-[#4b4131]">
            <div className="w-[84px] text-center text-sm leading-[23px]"><div className="pt-[3px]">1:44 PM</div><div>6/5/2023</div></div>
            <Cell label="Notifications" className="w-[60px]">
              <Art size="size-[30px]" box="0 0 30 30"><path d="M0 0h20v16h-8l-4 4v-4H0z" fill="#fff" /><path d="M4 4h12M4 8h12M4 12h8" stroke="#444" strokeWidth="1.3" /><circle cx="19.500" cy="20" r="9.800" fill="#3a3a3a" stroke="#8d8d8d" strokeWidth="1.2" /><text x="19.500" y="25" textAnchor="middle" fontSize="13" fontWeight="700" fill="#fff" fontFamily="Open Sans">8</text></Art>
            </Cell>
            <button type="button" aria-label="Show desktop" className="h-full w-1.5 border-l border-[#8a857c]" />
          </div>
        </div>
      </div>
    </footer>
  );
}

export default function App() {
  return (
    <div className="relative flex h-screen flex-col overflow-hidden bg-[#333333] font-['Open_Sans','Noto_Sans',sans-serif] text-white">
      <TabBar />
      <AddressBar />
      <div className="flex min-h-0 flex-1">
        <div className="flex min-w-0 flex-1 border-t border-[#696969]">
          <div className="flex min-w-0 flex-1 flex-col">
            <PdfToolbar />
            <Document />
          </div>
          <Scrollbar />
        </div>
        <Sidebar />
      </div>
      <Taskbar />
      <div className="pointer-events-none absolute right-[82px] bottom-[98px] w-[284px] whitespace-nowrap text-[#a3a3a3]">
        <p className="text-2xl leading-8">Activate Windows</p>
        <p className="text-[17px] leading-[26px]">Go to Settings to activate Windows.</p>
      </div>
    </div>
  );
}
